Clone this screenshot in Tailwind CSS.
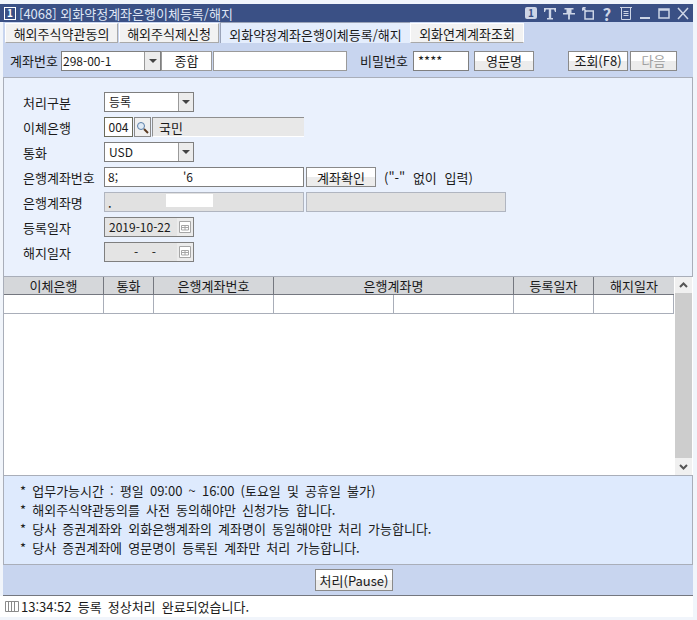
<!DOCTYPE html>
<html lang="ko">
<head>
  <meta charset="UTF-8" />
  <title>[4068] 외화약정계좌은행이체등록/해지</title>
  <script src="https://cdn.jsdelivr.net/npm/@tailwindcss/browser@4"></script>
</head>
<body class="bg-[#f1f5fb] w-[697px] h-[620px] overflow-hidden text-[12px] leading-none text-[#1a1a1a] [word-spacing:2.5px] font-['Noto_Sans_CJK_KR','Noto_Sans',sans-serif]">
  <div class="pt-[4px] pr-[4px] h-[617px] flex flex-col">

    <!-- title bar -->
    <div class="h-[18px] shrink-0 bg-[#3a5085] text-[#dfe6f5] flex items-center pl-[4px] pr-[4px]">
      <span class="w-[12px] h-[13px] border border-white text-white text-[10px] font-bold flex items-center justify-center mr-[3px]">1</span>
      <span class="text-[13px] [word-spacing:0px]">[4068] 외화약정계좌은행이체등록/해지</span>
      <div class="ml-auto flex items-center gap-[7px] text-[#cdd5e6]">
        <span class="w-[12px] h-[12px] rounded-[2px] bg-[#cdd5e6] text-[#3a5085] text-[10px] font-bold flex items-center justify-center">1</span>
        <svg width="12" height="13" viewBox="0 0 12 13" fill="currentColor"><path d="M0 1h12v4h-1L10 2.500H7.200V11H9v1.500H3V11h1.800V2.500H2L1 5H0z"/></svg>
        <svg width="12" height="13" viewBox="0 0 12 13" fill="currentColor"><path d="M1.500 1h9v1.500H8.500V6H12v1.500H6.900V12.500H5.100V7.500H0V6h3.500V2.500h-2z"/></svg>
        <svg width="12" height="13" viewBox="0 0 12 13" fill="none" stroke="currentColor" stroke-width="1.500"><path d="M3 4h8.300v8H3zM.7 .7l4 4M.7 .7v3M.7 .7h3"/></svg>
        <span class="w-[12px] text-center text-[17px] font-bold">?</span>
        <svg width="12" height="13" viewBox="0 0 12 13" fill="none" stroke="currentColor"><path d="M0 .500h12M1.500 .500v12h9V.500M3.500 4.500h5M3.500 6.500h5M3.500 8.500h5"/></svg>
        <svg width="12" height="13" viewBox="0 0 12 13" fill="currentColor"><path d="M1 10h10v2H1z"/></svg>
        <svg width="12" height="13" viewBox="0 0 12 13" fill="none" stroke="currentColor" stroke-width="1.500"><path d="M1 2h10v9H1zM1 3h10" /></svg>
        <svg width="12" height="13" viewBox="0 0 12 13" fill="none" stroke="currentColor" stroke-width="1.500"><path d="M1 1l10 11M11 1L1 12"/></svg>
      </div>
    </div>

    <div class="flex-1 flex flex-col bg-[#c8d5ef] ml-[3px]">
      <!-- tabs -->
      <div class="h-[21px] shrink-0 flex pl-[2px] pt-[1px] gap-[1px] text-[13px]">
        <div class="w-[113px] h-[20px] bg-[#f2f2f2] border border-white border-r-[#a9a9a9] border-b-[#a9a9a9] flex items-center justify-center">해외주식약관동의</div>
        <div class="w-[100px] h-[20px] bg-[#f2f2f2] border border-white border-r-[#a9a9a9] border-b-[#a9a9a9] flex items-center justify-center">해외주식제신청</div>
        <div class="w-[190px] h-[21px] -mt-[1px] bg-[#e4edfc] border-t border-l border-[#9aa3b8] flex items-center justify-center pt-[2px]">외화약정계좌은행이체등록/해지</div>
        <div class="w-[114px] h-[20px] -ml-[1px] bg-[#f2f2f2] border border-white border-b-[#a9a9a9] flex items-center justify-center">외화연계계좌조회</div>
      </div>

      <!-- account toolbar -->
      <div class="h-[34px] shrink-0 flex items-center pl-[7px] pt-[1px] text-[13px]">
        <span class="w-[51px]">계좌번호</span>
        <div class="w-[100px] h-[20px] bg-white border border-[#7f7f7f] flex items-center justify-between text-[12px] pl-[1px]">
          <span>298-00-1</span>
          <span class="w-[16px] h-[18px] bg-[#ececec] border-l border-[#9a9a9a] flex items-center justify-center"><span class="border-x-[4px] border-x-transparent border-t-[4px] border-t-[#444]"></span></span>
        </div>
        <div class="w-[51px] h-[20px] bg-white border border-[#9a9a9a] flex items-center justify-center">종합</div>
        <div class="w-[134px] h-[20px] ml-[1px] bg-white border border-[#9a9a9a]"></div>
        <span class="ml-[13px] w-[53px]">비밀번호</span>
        <div class="w-[56px] h-[20px] bg-white border border-[#7f7f7f] flex items-center pl-[4px]">****</div>
        <button class="ml-[5px] w-[60px] h-[20px] bg-[linear-gradient(#fff_50%,#ececec_50%)] border border-[#8a8a8a] flex items-center justify-center">영문명</button>
        <button class="ml-[34px] w-[60px] h-[20px] bg-[linear-gradient(#fff_50%,#ececec_50%)] border border-[#8a8a8a] flex items-center justify-center">조회(F8)</button>
        <button class="ml-[2px] w-[47px] h-[20px] bg-[linear-gradient(#fff_50%,#ececec_50%)] border border-[#8a8a8a] text-[#a0a0a0] flex items-center justify-center">다음</button>
      </div>

      <!-- form -->
      <div class="h-[199px] shrink-0 bg-[#eaf1fd] border-t border-l border-r border-[#a9aeb9] pt-[14px] pl-[19px] flex flex-col gap-[5px] text-[13px]">
        <div class="h-[20px] flex items-center">
          <span class="w-[81px]">처리구분</span>
          <div class="w-[90px] h-[20px] bg-white border border-[#7f7f7f] flex items-center justify-between pl-[4px] text-[12px]">
            <span>등록</span>
            <span class="w-[15px] h-[18px] bg-[#ececec] border-l border-[#9a9a9a] flex items-center justify-center"><span class="border-x-[4px] border-x-transparent border-t-[4px] border-t-[#444]"></span></span>
          </div>
        </div>
        <div class="h-[20px] flex items-center">
          <span class="w-[81px]">이체은행</span>
          <div class="w-[29px] h-[20px] bg-white border border-[#6b6b5a] flex items-center justify-center text-[12px]">004</div>
          <div class="w-[17px] h-[20px] ml-[1px] bg-[#f0f0f0] border border-[#8a8a8a] flex items-center justify-center">
            <svg width="13" height="13" viewBox="0 0 13 13" fill="none"><circle cx="5" cy="5" r="3.500" stroke="#5b7fa8" fill="#dfeaf5"/><path d="M8 8l4 4" stroke="#5a3a20" stroke-width="2"/></svg>
          </div>
          <div class="w-[152px] h-[20px] ml-[1px] bg-[#e8e8e8] border-t border-l border-[#8f8f8f] border-b-white border-b flex items-center pl-[6px]">국민</div>
        </div>
        <div class="h-[20px] flex items-center">
          <span class="w-[81px]">통화</span>
          <div class="w-[90px] h-[20px] bg-white border border-[#7f7f7f] flex items-center justify-between pl-[4px] text-[12px]">
            <span>USD</span>
            <span class="w-[15px] h-[18px] bg-[#ececec] border-l border-[#9a9a9a] flex items-center justify-center"><span class="border-x-[4px] border-x-transparent border-t-[4px] border-t-[#444]"></span></span>
          </div>
        </div>
        <div class="h-[20px] flex items-center">
          <span class="w-[81px]">은행계좌번호</span>
          <div class="w-[200px] h-[20px] bg-white border border-[#7f7f7f] flex items-center pl-[3px] text-[12px]"><span class="w-[75px]">8;</span><span>'6</span></div>
          <button class="ml-[2px] w-[70px] h-[20px] bg-[linear-gradient(#fff_50%,#ececec_50%)] border border-[#8a8a8a] flex items-center justify-center">계좌확인</button>
          <span class="ml-[8px] [word-spacing:4px]">("-" 없이 입력)</span>
        </div>
        <div class="h-[20px] flex items-center">
          <span class="w-[81px]">은행계좌명</span>
          <div class="w-[200px] h-[20px] bg-[#e1e1e1] border border-[#b0b5c0] flex items-center pl-[3px] relative">
            <span>.</span>
            <span class="absolute left-[61px] top-[1px] w-[47px] h-[13px] bg-white"></span>
          </div>
          <div class="ml-[2px] w-[200px] h-[20px] bg-[#e1e1e1] border border-[#b0b5c0]"></div>
        </div>
        <div class="h-[20px] flex items-center">
          <span class="w-[81px]">등록일자</span>
          <div class="w-[90px] h-[20px] bg-[#e4e4e4] border border-[#7f7f7f] flex items-center justify-between pl-[4px] text-[12px]">
            <span>2019-10-22</span>
            <span class="w-[16px] h-[18px] bg-[#ececec] flex items-center justify-center">
              <svg width="12" height="12" viewBox="0 0 12 12" fill="#fff" stroke="#a6a6a6"><path d="M.5 .5h11v11H.5zM2.500 4.500h7v4.500h-7zM6 4.500v4.500M2.500 6.500h7"/></svg>
            </span>
          </div>
        </div>
        <div class="h-[20px] flex items-center">
          <span class="w-[81px]">해지일자</span>
          <div class="w-[90px] h-[20px] bg-[#e4e4e4] border border-[#7f7f7f] flex items-center justify-between pl-[29px] text-[12px]">
            <span class="w-[22px] flex justify-between"><span>-</span><span>-</span></span>
            <span class="w-[16px] h-[18px] bg-[#ececec] flex items-center justify-center">
              <svg width="12" height="12" viewBox="0 0 12 12" fill="#fff" stroke="#a6a6a6"><path d="M.5 .5h11v11H.5zM2.500 4.500h7v4.500h-7zM6 4.500v4.500M2.500 6.500h7"/></svg>
            </span>
          </div>
        </div>
      </div>

      <!-- grid -->
      <div class="h-[199px] shrink-0 bg-white border-t border-l border-[#a9aeb9] flex text-[13px]">
        <div class="w-[670px]">
          <div class="h-[18px] flex bg-[#d5d7da] border-b border-[#74777f]">
            <div class="w-[100px] border-r border-[#74777f] flex items-center justify-center">이체은행</div>
            <div class="w-[50px] border-r border-[#74777f] flex items-center justify-center">통화</div>
            <div class="w-[120px] border-r border-[#74777f] flex items-center justify-center">은행계좌번호</div>
            <div class="w-[240px] border-r border-[#74777f] flex items-center justify-center">은행계좌명</div>
            <div class="w-[80px] border-r border-[#74777f] flex items-center justify-center">등록일자</div>
            <div class="w-[80px] flex items-center justify-center">해지일자</div>
          </div>
          <div class="h-[19px] flex border-b border-[#a9aeb9]">
            <div class="w-[100px] border-r border-[#a9aeb9]"></div>
            <div class="w-[50px] border-r border-[#a9aeb9]"></div>
            <div class="w-[120px] border-r border-[#a9aeb9]"></div>
            <div class="w-[120px] border-r border-[#a9aeb9]"></div>
            <div class="w-[120px] border-r border-[#a9aeb9]"></div>
            <div class="w-[80px] border-r border-[#a9aeb9]"></div>
            <div class="w-[80px] border-r border-[#a9aeb9]"></div>
          </div>
        </div>
        <div class="ml-[1px] w-[17px] flex flex-col bg-[#f0f0f0]">
          <div class="h-[16px] flex items-center justify-center"><svg width="9" height="6" viewBox="0 0 9 6" fill="none" stroke="#555" stroke-width="2"><path d="M1 5l3.500-3.500L8 5"/></svg></div>
          <div class="flex-1 bg-[#cdcdcd]"></div>
          <div class="h-[17px] flex items-center justify-center"><svg width="9" height="6" viewBox="0 0 9 6" fill="none" stroke="#555" stroke-width="2"><path d="M1 1l3.500 3.500L8 1"/></svg></div>
        </div>
      </div>

      <!-- notes -->
      <div class="h-[90px] shrink-0 bg-[#deeafd] border border-[#a9aeb9] pl-[16px] pt-[6px] flex flex-col gap-[2px] text-[13px]">
        <p class="h-[17px] flex items-center whitespace-pre">* 업무가능시간 : 평일 09:00 ~ 16:00 (토요일 및 공휴일 불가)</p>
        <p class="h-[17px] flex items-center whitespace-pre">* 해외주식약관동의를 사전 동의해야만 신청가능 합니다.</p>
        <p class="h-[17px] flex items-center whitespace-pre">* 당사 증권계좌와 외화은행계좌의 계좌명이 동일해야만 처리 가능합니다.</p>
        <p class="h-[17px] flex items-center whitespace-pre">* 당사 증권계좌에 영문명이 등록된 계좌만 처리 가능합니다.</p>
      </div>

      <!-- action bar -->
      <div class="h-[31px] shrink-0 flex items-center pl-[312px] border-b border-[#74777f]">
        <button class="w-[78px] h-[22px] bg-[linear-gradient(#fff_50%,#ececec_50%)] border border-[#8a8a8a] flex items-center justify-center text-[13px]">처리(Pause)</button>
      </div>

      <!-- status -->
      <div class="flex-1 bg-white flex items-center text-[13px] pl-[2px] -ml-[3px]">
        <svg width="14" height="11" viewBox="0 0 14 11" fill="none" stroke="#8a8a8a" class="mr-[2px] ml-[3px]"><path d="M.5 .5h13v10H.5zM3.500 1v9M6.500 1v9M9.500 1v9"/></svg>
        <span>13:34:52 등록 정상처리 완료되었습니다.</span>
      </div>
    </div>
  </div>
</body>
</html>
